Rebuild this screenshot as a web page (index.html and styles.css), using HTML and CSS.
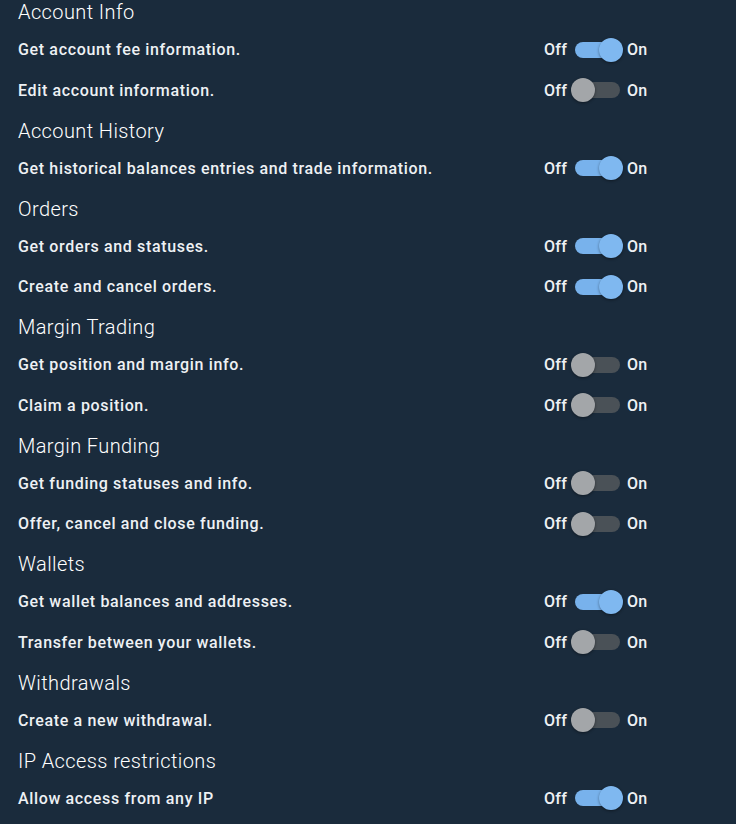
FILE: index.html
```html
<!DOCTYPE html>
<html lang="en">
<head>
    <meta charset="UTF-8">
    <title>API Key Permissions</title>
    <link rel="stylesheet" href="styles.css">
</head>
<body>
    <div class="permissions">

        <h2 class="group-title">Account Info</h2>
        <div class="perm-row">
            <span class="perm-label">Get account fee information.</span>
            <label class="switch"><span class="switch-off">Off</span><span class="track on"><span class="knob"></span></span><span class="switch-on">On</span></label>
        </div>
        <div class="perm-row">
            <span class="perm-label">Edit account information.</span>
            <label class="switch"><span class="switch-off">Off</span><span class="track"><span class="knob"></span></span><span class="switch-on">On</span></label>
        </div>

        <h2 class="group-title">Account History</h2>
        <div class="perm-row">
            <span class="perm-label">Get historical balances entries and trade information.</span>
            <label class="switch"><span class="switch-off">Off</span><span class="track on"><span class="knob"></span></span><span class="switch-on">On</span></label>
        </div>

        <h2 class="group-title">Orders</h2>
        <div class="perm-row">
            <span class="perm-label">Get orders and statuses.</span>
            <label class="switch"><span class="switch-off">Off</span><span class="track on"><span class="knob"></span></span><span class="switch-on">On</span></label>
        </div>
        <div class="perm-row">
            <span class="perm-label">Create and cancel orders.</span>
            <label class="switch"><span class="switch-off">Off</span><span class="track on"><span class="knob"></span></span><span class="switch-on">On</span></label>
        </div>

        <h2 class="group-title">Margin Trading</h2>
        <div class="perm-row">
            <span class="perm-label">Get position and margin info.</span>
            <label class="switch"><span class="switch-off">Off</span><span class="track"><span class="knob"></span></span><span class="switch-on">On</span></label>
        </div>
        <div class="perm-row">
            <span class="perm-label">Claim a position.</span>
            <label class="switch"><span class="switch-off">Off</span><span class="track"><span class="knob"></span></span><span class="switch-on">On</span></label>
        </div>

        <h2 class="group-title">Margin Funding</h2>
        <div class="perm-row">
            <span class="perm-label">Get funding statuses and info.</span>
            <label class="switch"><span class="switch-off">Off</span><span class="track"><span class="knob"></span></span><span class="switch-on">On</span></label>
        </div>
        <div class="perm-row">
            <span class="perm-label">Offer, cancel and close funding.</span>
            <label class="switch"><span class="switch-off">Off</span><span class="track"><span class="knob"></span></span><span class="switch-on">On</span></label>
        </div>

        <h2 class="group-title">Wallets</h2>
        <div class="perm-row">
            <span class="perm-label">Get wallet balances and addresses.</span>
            <label class="switch"><span class="switch-off">Off</span><span class="track on"><span class="knob"></span></span><span class="switch-on">On</span></label>
        </div>
        <div class="perm-row">
            <span class="perm-label">Transfer between your wallets.</span>
            <label class="switch"><span class="switch-off">Off</span><span class="track"><span class="knob"></span></span><span class="switch-on">On</span></label>
        </div>

        <h2 class="group-title">Withdrawals</h2>
        <div class="perm-row">
            <span class="perm-label">Create a new withdrawal.</span>
            <label class="switch"><span class="switch-off">Off</span><span class="track"><span class="knob"></span></span><span class="switch-on">On</span></label>
        </div>

        <h2 class="group-title">IP Access restrictions</h2>
        <div class="perm-row">
            <span class="perm-label">Allow access from any IP</span>
            <label class="switch"><span class="switch-off">Off</span><span class="track on"><span class="knob"></span></span><span class="switch-on">On</span></label>
        </div>

    </div>
</body>
</html>
```

FILE: styles.css
```css
body {
    font-family: Roboto, 'Liberation Sans', sans-serif;
    background-color: #1a2b3c;
    color: #ffffff;
    margin: 0;
    padding: 0;
}
.permissions {
    padding-left: 18px;
}
.group-title {
    margin: 0;
    padding: 8px 0 5.5px;
    font-size: 20px;
    line-height: 24px;
    font-weight: 300;
    letter-spacing: 0.4px;
    color: #ffffff;
}
.group-title:first-child {
    padding-top: 0;
}
.perm-row {
    display: grid;
    grid-template-columns: 526px auto;
    align-items: center;
    height: 40.5px;
    font-size: 16px;
    font-weight: 500;
    letter-spacing: 0.65px;
    color: #eef1f4;
}
.switch {
    display: flex;
    align-items: center;
    letter-spacing: 0.3px;
    cursor: pointer;
}
.switch-off {
    width: 31px;
}
.switch-on {
    margin-left: 7px;
}
.track {
    position: relative;
    width: 45px;
    height: 16px;
    border-radius: 8px;
    background-color: #4a5157;
}
.knob {
    position: absolute;
    top: -4px;
    left: -4px;
    width: 24px;
    height: 24px;
    border-radius: 50%;
    background-color: #a3a6a9;
    box-shadow: 0 1px 3px rgba(0, 0, 0, 0.4);
}
.track.on {
    background-color: #78b2ec;
}
.track.on .knob {
    left: 24px;
    background-color: #7fb8f0;
}
```
